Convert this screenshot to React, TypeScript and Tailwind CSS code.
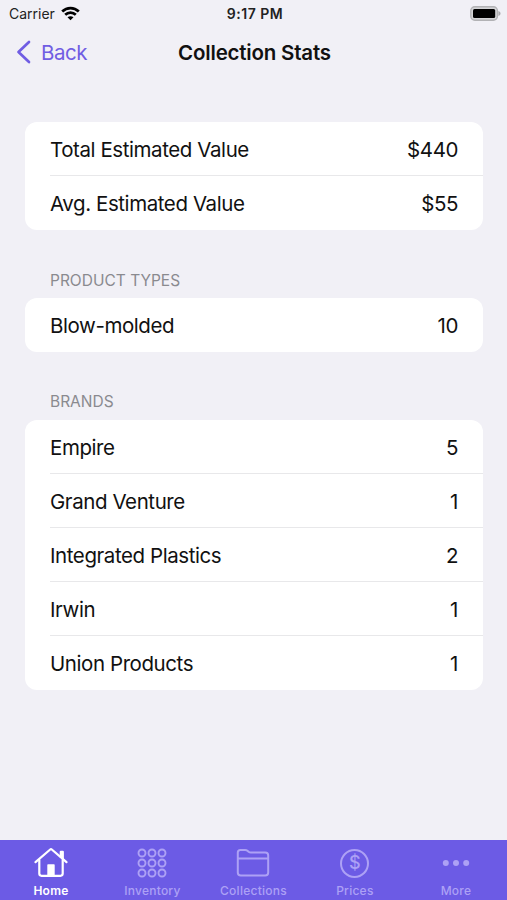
import type { ReactNode } from 'react';

type Row = { label: string; value: string };

const values: Row[] = [
  { label: 'Total Estimated Value', value: '$440' },
  { label: 'Avg. Estimated Value', value: '$55' },
];
const types: Row[] = [{ label: 'Blow-molded', value: '10' }];
const brands: Row[] = [
  { label: 'Empire', value: '5' },
  { label: 'Grand Venture', value: '1' },
  { label: 'Integrated Plastics', value: '2' },
  { label: 'Irwin', value: '1' },
  { label: 'Union Products', value: '1' },
];

function Card({ rows }: { rows: Row[] }) {
  return (
    <div className="overflow-hidden rounded-xl bg-white pl-[25px]">
      {rows.map((row, i) => (
        <div
          key={row.label}
          className={`flex h-[54.1px] items-center justify-between pr-[24.5px] text-[20.5px] leading-6 tracking-[-0.42px] text-[#111] ${
            i < rows.length - 1 ? 'border-b border-[#e8e8ea] pt-[2.4px]' : 'pt-[1.4px]'
          }`}
        >
          <span>{row.label}</span>
          <span>{row.value}</span>
        </div>
      ))}
    </div>
  );
}

function Heading({ children }: { children: ReactNode }) {
  return <h2 className="pl-[25px] text-[15.5px] leading-5 text-[#8a8a8f]">{children}</h2>;
}

function HomeIcon() {
  return (
    <svg width="36" height="34" viewBox="0 0 36 34" fill="none" stroke="currentColor" strokeWidth="2.2" strokeLinecap="round" strokeLinejoin="round">
      <path d="M2.5 16.2 17.2 3.5a1.2 1.2 0 0 1 1.6 0L33.5 16.2" />
      <path d="M6.3 14v13.6c0 1.3.9 2.2 2.2 2.2h19c1.3 0 2.2-.9 2.2-2.2V14M27.8 11V5.8h2V13" />
      <path d="M15 19h6v10.5h-6z" fill="currentColor" strokeWidth="1.4" />
    </svg>
  );
}

function GridIcon() {
  return (
    <svg width="36" height="34" viewBox="0 0 36 34" fill="none" stroke="currentColor" strokeWidth="1.9">
      {[7, 17, 27].map((y) => [8, 18, 28].map((x) => <circle key={`${x}-${y}`} cx={x} cy={y} r="3.5" />))}
    </svg>
  );
}

function FolderIcon() {
  return (
    <svg width="36" height="34" viewBox="0 0 36 34" fill="none" stroke="currentColor" strokeWidth="2" strokeLinejoin="round">
      <path d="M2.8 26.5v-20c0-1.6 1-2.5 2.6-2.5h4.7c1 0 1.6.2 2.3.8l1.2 1c.7.6 1.3.8 2.3.8h14.3c1.9 0 3 1.1 3 3v16.9c0 1.9-1.1 3-3 3H5.8c-1.9 0-3-1.1-3-3ZM3 12.6h30" />
    </svg>
  );
}

function DollarIcon() {
  return (
    <span className="flex h-[34px] w-9 items-center justify-center">
      <span className="flex size-[29px] items-center justify-center rounded-full border-2 border-current text-[18px] leading-none font-medium">
        $
      </span>
    </span>
  );
}

function MoreIcon() {
  return (
    <svg width="36" height="34" viewBox="0 0 36 34" fill="currentColor">
      <circle cx="7.8" cy="17" r="3" />
      <circle cx="18" cy="17" r="3" />
      <circle cx="28.2" cy="17" r="3" />
    </svg>
  );
}

const tabs = [
  { name: 'Home', icon: <HomeIcon />, style: 'pl-[0.6px] font-semibold text-white' },
  { name: 'Inventory', icon: <GridIcon />, style: 'pl-[0.6px] font-medium text-[#ada1f5]' },
  { name: 'Collections', icon: <FolderIcon />, style: 'font-medium text-[#ada1f5]' },
  { name: 'Prices', icon: <DollarIcon />, style: 'font-medium text-[#ada1f5]' },
  { name: 'More', icon: <MoreIcon />, style: 'pr-[0.6px] font-medium text-[#ada1f5]' },
];

export default function App() {
  return (
    <div className="flex h-[900px] w-[507px] flex-col overflow-hidden bg-[#f1f0f6] font-['Inter','Liberation_Sans',sans-serif]">
      <div className="grid h-7 grid-cols-3 items-center pr-[6px] pl-[9px] text-[14px] leading-none text-[#222]">
        <div className="flex items-center gap-[6px]">
          <span>Carrier</span>
          <svg className="-mt-[2px]" width="19" height="15" viewBox="0 0 19 15" fill="none" stroke="#000" strokeWidth="2.7">
            <path d="M1.2 5.5C5.9.9 13.1.9 17.8 5.5M4.2 8.8c3-2.9 7.6-2.9 10.6 0" />
            <path d="M6.5 11.3c1.8-1.5 4.2-1.5 6 0l-3 3z" fill="#000" stroke="none" />
          </svg>
        </div>
        <span className="text-center font-semibold tracking-[0.5px]">9:17 PM</span>
        <svg className="-mt-[2px] justify-self-end" width="31" height="15" viewBox="0 0 31 15">
          <rect x=".8" y=".8" width="26.6" height="13.4" rx="4" fill="#d4d4d7" stroke="#b2b2b5" strokeWidth="1.4" />
          <rect x="3" y="3" width="22.2" height="9" rx="1.5" fill="#000" />
          <path d="M28.4 5c2.8 1.2 2.8 3.8 0 5z" fill="#a9a9ad" />
        </svg>
      </div>
      <header className="grid h-12 grid-cols-3 items-center pl-[2px]">
        <div className="flex items-center gap-[9px] pl-[14px] text-[20.5px] leading-6 tracking-[-0.5px] text-[#705de3]">
          <svg width="16" height="26" viewBox="0 0 16 26" fill="none" stroke="currentColor" strokeWidth="2.7" strokeLinecap="round" strokeLinejoin="round">
            <path d="M13 3 2.5 13 13 23" />
          </svg>
          <span className="pt-px">Back</span>
        </div>
        <h1 className="pt-px text-center text-[20.5px] leading-6 font-semibold tracking-[-0.2px] whitespace-nowrap text-[#111]">Collection Stats</h1>
      </header>
      <main className="flex grow flex-col pt-[46px] pr-[24.5px] pl-[25px]">
        <Card rows={values} />
        <div className="mt-[41px] mb-[6.6px]"><Heading>PRODUCT TYPES</Heading></div>
        <Card rows={types} />
        <div className="mt-10 mb-[8px]"><Heading>BRANDS</Heading></div>
        <Card rows={brands} />
      </main>
      <nav className="grid h-[60px] shrink-0 grid-cols-5 bg-[#6c5be5]">
        {tabs.map((tab) => (
          <div key={tab.name} className={`flex flex-col items-center pt-[6px] ${tab.style}`}>
            {tab.icon}
            <span className="mt-[3px] text-[12px] leading-4 tracking-[0.25px]">{tab.name}</span>
          </div>
        ))}
      </nav>
    </div>
  );
}
